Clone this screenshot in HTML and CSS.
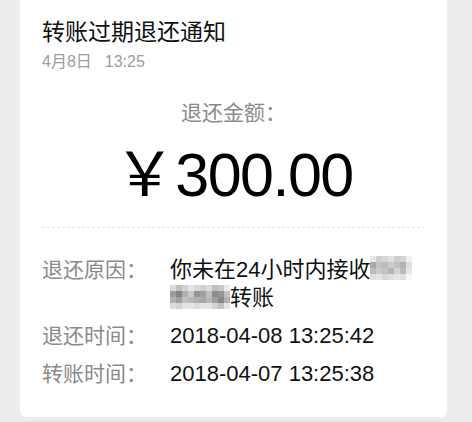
FILE: index.html
```html
<!DOCTYPE html>
<html lang="zh-CN">
<head>
    <meta charset="UTF-8">
    <meta name="viewport" content="width=device-width, initial-scale=1.0">
    <title>转账过期退还通知</title>
    <link rel="stylesheet" href="styles.css">
</head>
<body>
    <div class="page">
        <div class="card">
            <div class="card-head">
                <h1 class="title">转账过期退还通知</h1>
                <p class="date">4月8日<span class="time">13:25</span></p>
            </div>

            <div class="amount-box">
                <p class="amount-label">退还金额：</p>
                <p class="amount"><span class="yen">￥</span>300.00</p>
            </div>

            <div class="details">
                <div class="row">
                    <span class="label">退还原因：</span>
                    <span class="value">你未在24小时内接收<svg class="mosaic" width="42" height="24" viewBox="0 0 7 4" shape-rendering="crispEdges">
                        <rect x="0" y="0" width="1" height="1" fill="#e6e6e6"/><rect x="1" y="0" width="1" height="1" fill="#cfcfcf"/><rect x="2" y="0" width="1" height="1" fill="#d6d6d6"/><rect x="3" y="0" width="1" height="1" fill="#e0e0e0"/><rect x="4" y="0" width="1" height="1" fill="#cccccc"/><rect x="5" y="0" width="1" height="1" fill="#d4d4d4"/><rect x="6" y="0" width="1" height="1" fill="#f0f0f0"/>
                        <rect x="0" y="1" width="1" height="1" fill="#a8a8a8"/><rect x="1" y="1" width="1" height="1" fill="#c2c2c2"/><rect x="2" y="1" width="1" height="1" fill="#bcbcbc"/><rect x="3" y="1" width="1" height="1" fill="#cbcbcb"/><rect x="4" y="1" width="1" height="1" fill="#c2c2c2"/><rect x="5" y="1" width="1" height="1" fill="#b4b4b4"/><rect x="6" y="1" width="1" height="1" fill="#dedede"/>
                        <rect x="0" y="2" width="1" height="1" fill="#bababa"/><rect x="1" y="2" width="1" height="1" fill="#cbcbcb"/><rect x="2" y="2" width="1" height="1" fill="#c2c2c2"/><rect x="3" y="2" width="1" height="1" fill="#b4b4b4"/><rect x="4" y="2" width="1" height="1" fill="#d4d4d4"/><rect x="5" y="2" width="1" height="1" fill="#bcbcbc"/><rect x="6" y="2" width="1" height="1" fill="#e6e6e6"/>
                        <rect x="0" y="3" width="1" height="1" fill="#e0e0e0"/><rect x="1" y="3" width="1" height="1" fill="#e6e6e6"/><rect x="2" y="3" width="1" height="1" fill="#d6d6d6"/><rect x="3" y="3" width="1" height="1" fill="#e0e0e0"/><rect x="4" y="3" width="1" height="1" fill="#e6e6e6"/><rect x="5" y="3" width="1" height="1" fill="#e0e0e0"/><rect x="6" y="3" width="1" height="1" fill="#f6f6f6"/>
                    </svg><br><svg class="mosaic mosaic-low" width="60" height="24" viewBox="0 0 10 4" shape-rendering="crispEdges">
                        <rect x="0" y="0" width="1" height="1" fill="#dadada"/><rect x="1" y="0" width="1" height="1" fill="#c0c0c0"/><rect x="2" y="0" width="1" height="1" fill="#d2d2d2"/><rect x="3" y="0" width="1" height="1" fill="#e4e4e4"/><rect x="4" y="0" width="1" height="1" fill="#d8d8d8"/><rect x="5" y="0" width="1" height="1" fill="#d0d0d0"/><rect x="6" y="0" width="1" height="1" fill="#dadada"/><rect x="7" y="0" width="1" height="1" fill="#c0c0c0"/><rect x="8" y="0" width="1" height="1" fill="#c8c8c8"/><rect x="9" y="0" width="1" height="1" fill="#eaeaea"/>
                        <rect x="0" y="1" width="1" height="1" fill="#9c9c9c"/><rect x="1" y="1" width="1" height="1" fill="#858585"/><rect x="2" y="1" width="1" height="1" fill="#b0b0b0"/><rect x="3" y="1" width="1" height="1" fill="#c8c8c8"/><rect x="4" y="1" width="1" height="1" fill="#969696"/><rect x="5" y="1" width="1" height="1" fill="#a0a0a0"/><rect x="6" y="1" width="1" height="1" fill="#c0c0c0"/><rect x="7" y="1" width="1" height="1" fill="#8c8c8c"/><rect x="8" y="1" width="1" height="1" fill="#969696"/><rect x="9" y="1" width="1" height="1" fill="#c2c2c2"/>
                        <rect x="0" y="2" width="1" height="1" fill="#b0b0b0"/><rect x="1" y="2" width="1" height="1" fill="#a0a0a0"/><rect x="2" y="2" width="1" height="1" fill="#c0c0c0"/><rect x="3" y="2" width="1" height="1" fill="#b8b8b8"/><rect x="4" y="2" width="1" height="1" fill="#b0b0b0"/><rect x="5" y="2" width="1" height="1" fill="#a8a8a8"/><rect x="6" y="2" width="1" height="1" fill="#b8b8b8"/><rect x="7" y="2" width="1" height="1" fill="#a0a0a0"/><rect x="8" y="2" width="1" height="1" fill="#888888"/><rect x="9" y="2" width="1" height="1" fill="#b0b0b0"/>
                        <rect x="0" y="3" width="1" height="1" fill="#dcdcdc"/><rect x="1" y="3" width="1" height="1" fill="#d2d2d2"/><rect x="2" y="3" width="1" height="1" fill="#e4e4e4"/><rect x="3" y="3" width="1" height="1" fill="#e6e6e6"/><rect x="4" y="3" width="1" height="1" fill="#dcdcdc"/><rect x="5" y="3" width="1" height="1" fill="#e4e4e4"/><rect x="6" y="3" width="1" height="1" fill="#e4e4e4"/><rect x="7" y="3" width="1" height="1" fill="#d2d2d2"/><rect x="8" y="3" width="1" height="1" fill="#c2c2c2"/><rect x="9" y="3" width="1" height="1" fill="#e6e6e6"/>
                    </svg>转账</span>
                </div>
                <div class="row">
                    <span class="label">退还时间：</span>
                    <span class="value">2018-04-08 13:25:42</span>
                </div>
                <div class="row">
                    <span class="label">转账时间：</span>
                    <span class="value">2018-04-07 13:25:38</span>
                </div>
            </div>
        </div>
    </div>
</body>
</html>
```

FILE: styles.css
```css
* {box-sizing: border-box;}
body {
    margin: 0;
    background: #ededed;
    font-family: "Liberation Sans", "Noto Sans CJK SC", sans-serif;
    color: #111;
}
.page {
    padding: 0 25px 10px 20px;
}
.card {
    background: #fff;
    border-radius: 0 0 6px 6px;
    padding: 17px 22px 29px;
}
.title {
    margin: 0;
    font-size: 23px;
    font-weight: normal;
    line-height: 30px;
    color: #111;
}
.date {
    margin: 5px 0 0;
    font-size: 16px;
    line-height: 20px;
    color: #9c9c9c;
}
.time {margin-left: 13px;}

.amount-box {
    text-align: center;
    padding: 28px 0 17px;
    border-bottom: 1px dashed #e4e4e4;
}
.amount-label {
    margin: 0;
    font-size: 21px;
    line-height: 26px;
    color: #8a8a8a;
}
.amount {
    margin: 9px 0 0;
    font-size: 61px;
    line-height: 70px;
    letter-spacing: -1.5px;
    color: #000;
}
.yen {font-family: "Noto Sans CJK SC", sans-serif; letter-spacing: 0;}

.details {
    padding-top: 28px;
    display: flex;
    flex-direction: column;
    gap: 10px;
}
.row {
    display: flex;
    line-height: 28px;
}
.label {
    flex: none;
    width: 128px;
    font-size: 21px;
    color: #8a8a8a;
}
.value {
    font-size: 22px;
    color: #111;
}
.mosaic {vertical-align: -3px;}
.mosaic-low {vertical-align: -4px;}
```
